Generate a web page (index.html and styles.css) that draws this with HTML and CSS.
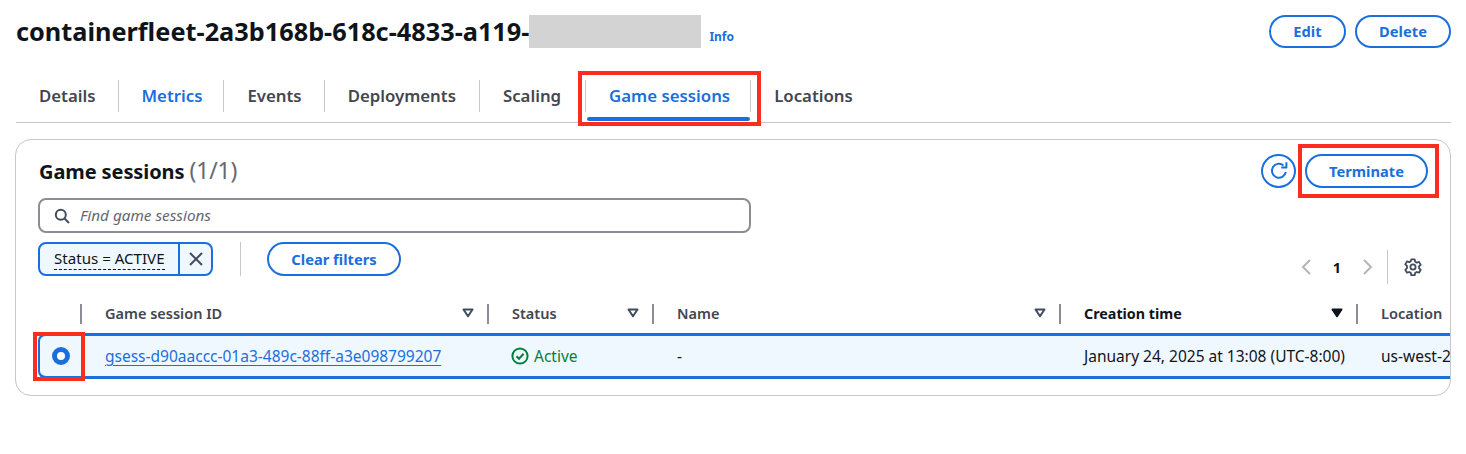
FILE: index.html
```html
<!DOCTYPE html>
<html lang="en">
<head>
<meta charset="utf-8">
<title>Game sessions</title>
<link rel="stylesheet" href="styles.css">
</head>
<body>
<header class="page-head">
  <div class="title-wrap">
    <h1 class="title">containerfleet-2a3b168b-618c-4833-a119-</h1>
    <span class="mask"></span>
    <a class="info">Info</a>
  </div>
  <div class="head-actions">
    <button class="btn btn-edit">Edit</button>
    <button class="btn btn-delete">Delete</button>
  </div>
</header>

<nav class="tabs">
  <a class="tab tab-first">Details</a>
  <a class="tab tab-link">Metrics</a>
  <a class="tab">Events</a>
  <a class="tab tab-deploy">Deployments</a>
  <a class="tab tab-scaling">Scaling</a>
  <a class="tab tab-active">Game sessions</a>
  <a class="tab">Locations</a>
  <span class="mark mark-tab"></span>
</nav>

<section class="card">
  <div class="card-head">
    <h2 class="card-title">Game sessions <span class="count">(1/1)</span></h2>
    <div class="card-actions">
      <button class="icon-btn" aria-label="Refresh">
        <svg width="20" height="20" viewBox="0 0 20 20" fill="none" stroke="#1a6fdc" stroke-width="2"><path d="M16.8 11A7 7 0 1 1 14.4 4.4"/><path d="M17.4 1.2v5.2h-5.2" stroke-linejoin="round"/></svg>
      </button>
      <button class="btn btn-terminate">Terminate</button>
      <span class="mark mark-terminate"></span>
    </div>
  </div>

  <div class="search">
    <svg width="16" height="16" viewBox="0 0 16 16" fill="none" stroke="#414d5c" stroke-width="2"><circle cx="6.8" cy="6.8" r="5"/><path d="M10.5 10.5l4.5 4.5"/></svg>
    <span class="placeholder">Find game sessions</span>
  </div>

  <div class="filter-row">
    <div class="chip">
      <span class="chip-label"><span class="chip-text">Status = ACTIVE</span></span>
      <span class="chip-x">
        <svg width="14" height="14" viewBox="0 0 14 14" fill="none" stroke="#414d5c" stroke-width="2"><path d="M1 1l12 12M13 1L1 13"/></svg>
      </span>
    </div>
    <span class="filter-div"></span>
    <button class="btn btn-clear">Clear filters</button>
    <div class="pager">
      <svg width="10" height="16" viewBox="0 0 10 16" fill="none" stroke="#b4b4bb" stroke-width="2"><path d="M9 1L2 8l7 7"/></svg>
      <span class="page-num">1</span>
      <svg width="10" height="16" viewBox="0 0 10 16" fill="none" stroke="#b4b4bb" stroke-width="2"><path d="M1 1l7 7-7 7"/></svg>
      <span class="pager-div"></span>
      <svg class="gear" width="18" height="18" viewBox="0 0 18 18" fill="none" stroke="#414d5c" stroke-width="1.8" stroke-linejoin="round"><path d="M7.3 1.4h3.4l.5 2.3 1.6.9 2.2-.7 1.7 3-1.7 1.5v1.8l1.7 1.6-1.7 2.9-2.2-.7-1.6.9-.5 2.3H7.3l-.5-2.3-1.6-.9-2.2.7-1.7-2.9 1.7-1.6V7.9L1.3 6.4l1.7-3 2.2.7 1.6-.9z"/><circle cx="9" cy="9" r="2.6"/></svg>
    </div>
  </div>

  <div class="table">
    <div class="th th-select"></div>
    <div class="th">Game session ID<svg class="caret" width="12" height="10" viewBox="0 0 12 10" fill="none" stroke="#414d5c" stroke-width="2" stroke-linejoin="round"><path d="M1.5 1.5h9L6 8.3z"/></svg></div>
    <div class="th">Status<svg class="caret" width="12" height="10" viewBox="0 0 12 10" fill="none" stroke="#414d5c" stroke-width="2" stroke-linejoin="round"><path d="M1.5 1.5h9L6 8.3z"/></svg></div>
    <div class="th">Name<svg class="caret" width="12" height="10" viewBox="0 0 12 10" fill="none" stroke="#414d5c" stroke-width="2" stroke-linejoin="round"><path d="M1.5 1.5h9L6 8.3z"/></svg></div>
    <div class="th th-sorted">Creation time<svg class="caret" width="12" height="10" viewBox="0 0 12 10" fill="#0f141a" stroke="#0f141a" stroke-width="2" stroke-linejoin="round"><path d="M1.5 1.5h9L6 8.3z"/></svg></div>
    <div class="th th-last">Location</div>

    <div class="td td-select"><span class="radio"></span><span class="mark mark-radio"></span></div>
    <div class="td"><a class="session-link">gsess-d90aaccc-01a3-489c-88ff-a3e098799207</a></div>
    <div class="td td-status">
      <svg width="18" height="18" viewBox="0 0 18 18" fill="none" stroke="#037f3c" stroke-width="2"><circle cx="9" cy="9" r="7.6"/><path d="M5.5 9.2l2.5 2.5 4.6-5"/></svg>
      <span>Active</span>
    </div>
    <div class="td">-</div>
    <div class="td">January 24, 2025 at 13:08 (UTC-8:00)</div>
    <div class="td td-last">us-west-2</div>
  </div>
</section>
</body>
</html>
```
FILE: styles.css
```css
* { box-sizing: border-box; }

html, body { margin: 0; padding: 0; background: #fff; }

body {
  width: 1466px;
  height: 454px;
  overflow: hidden;
  font-family: "Noto Sans", "Open Sans", sans-serif;
  font-size: 15.5px;
  color: #0f141a;
}

/* Page header */
.page-head {
  display: flex;
  justify-content: space-between;
  height: 80px;
  padding: 15px 15px 0 16px;
}

.title-wrap { display: flex; align-items: flex-start; }

.title {
  margin: 0;
  font-size: 25.3px;
  line-height: 33px;
  font-weight: 700;
}

.mask { width: 172px; height: 33px; background: #d3d3d3; }

.info {
  margin: 14px 0 0 8px;
  font-size: 12px;
  line-height: 16px;
  font-weight: 700;
  color: #1a6fdc;
}

.head-actions { display: flex; gap: 9px; }

.btn {
  height: 33px;
  border: 2px solid #1a6fdc;
  border-radius: 17px;
  background: #fff;
  padding: 0;
  font: 700 14.7px/18px "Noto Sans", sans-serif;
  color: #1a6fdc;
}

.btn-edit { width: 77px; padding-bottom: 1px; }
.btn-delete { width: 96px; padding-bottom: 1px; }
.btn-terminate { width: 123px; height: 34px; }
.btn-clear { width: 134px; height: 34px; margin-left: 26px; }

/* Tabs */
.tabs {
  position: relative;
  display: flex;
  height: 43px;
  margin: 0 15px 0 16px;
  border-bottom: 1px solid #c6c6cd;
}

.tab {
  position: relative;
  height: 32px;
  padding: 0 22px 0 23px;
  border-left: 1px solid #c6c6cd;
  font-size: 16.8px;
  line-height: 32px;
  font-weight: 600;
  color: #424650;
}

.tab-first { border-left: 0; }
.tab-link { color: #1a6fdc; padding-right: 21px; }
.tab-deploy { padding-right: 23px; }
.tab-scaling { padding-right: 24px; }
.tab-active { color: #1a6fdc; padding-right: 20px; }

.tab-active::after {
  content: "";
  position: absolute;
  left: 1px;
  right: 0;
  top: 37px;
  height: 4px;
  border-radius: 2px;
  background: #1a6fdc;
}

/* Red annotation boxes */
.mark { position: absolute; border: 4px solid #fa2d1f; pointer-events: none; }
.mark-tab { left: 562px; top: -9px; width: 183px; height: 55px; }
.mark-terminate { left: 37px; top: -10px; width: 141px; height: 54px; }
.mark-radio { left: -7px; top: -4px; width: 52px; height: 49px; }

/* Card */
.card {
  height: 257px;
  margin: 16px 15px 0;
  padding: 14px 0 0 22px;
  border: 1px solid #c6c6cd;
  border-radius: 16px;
  overflow: hidden;
}

.card-head {
  display: flex;
  justify-content: space-between;
  height: 44px;
}

.card-title {
  margin: 2px 0 0 1px;
  font-size: 20px;
  line-height: 32px;
  font-weight: 700;
  letter-spacing: -0.1px;
}

.count { font-weight: 400; font-size: 22.8px; line-height: 20px; color: #656871; }

.card-actions {
  position: relative;
  display: flex;
  gap: 9px;
  margin-right: 22px;
}

.icon-btn {
  display: flex;
  align-items: center;
  justify-content: center;
  width: 35px;
  height: 34px;
  padding: 0;
  border: 2px solid #1a6fdc;
  border-radius: 50%;
  background: #fff;
}

.search {
  display: flex;
  align-items: center;
  gap: 10px;
  width: 713px;
  height: 35px;
  padding-left: 14px;
  border: 2px solid #8c8c94;
  border-radius: 8px;
}

.placeholder { margin-top: -2px; font-style: italic; color: #656871; font-size: 15.3px; }

.filter-row {
  display: flex;
  align-items: flex-start;
  margin-top: 9px;
  margin-right: 22px;
}

.chip {
  display: flex;
  width: 175px;
  height: 34px;
  border: 2px solid #1a6fdc;
  border-radius: 8px;
  background: #f0f8ff;
  font-size: 15.1px;
}

.chip-label {
  flex: 1;
  padding: 0 0 0 14px;
  line-height: 28px;
  border-right: 2px solid #1a6fdc;
}

.chip-text { border-bottom: 1px dashed #0f141a; padding-bottom: 1px; }

.chip-x {
  display: flex;
  align-items: center;
  justify-content: center;
  width: 31px;
}

.filter-div { width: 1px; height: 34px; margin-left: 27px; background: #c6c6cd; }

.pager {
  display: flex;
  align-items: center;
  height: 34px;
  margin: 8px 0 0 auto;
}

.page-num { width: 52px; text-align: center; font-weight: 700; font-size: 14.5px; }

.pager-div { width: 1px; height: 34px; margin: 0 16px 0 14px; background: #c6c6cd; }

.gear { margin-right: 6px; }

/* Table */
.table {
  display: grid;
  grid-template-columns: 42px 407px 165px 407px 297px 96px;
  margin-top: 16px;
  width: 1414px;
}

.th {
  position: relative;
  display: flex;
  align-items: center;
  justify-content: space-between;
  height: 33px;
  padding: 0 13px 7px 25px;
  font-weight: 600;
  font-size: 14.5px;
  color: #424650;
  white-space: nowrap;
}

.th::before {
  content: "";
  position: absolute;
  left: 0;
  top: 4px;
  bottom: 9px;
  width: 2px;
  background: #8c8c94;
}

.th-select::before { display: none; }
.th-sorted { color: #0f141a; font-weight: 700; font-size: 14.3px; }
.th-last { padding-right: 0; font-size: 14.6px; }

.td {
  display: flex;
  align-items: center;
  height: 46px;
  padding-left: 25px;
  background: #f0f8ff;
  border-top: 3px solid #1a6fdc;
  border-bottom: 3px solid #1a6fdc;
  white-space: nowrap;
  overflow: hidden;
}

.td-select {
  position: relative;
  overflow: visible;
  padding-left: 12px;
  border-left: 2px solid #1a6fdc;
  border-radius: 8px 0 0 8px;
}

.radio {
  width: 18px;
  height: 18px;
  border: 5px solid #1a6fdc;
  border-radius: 50%;
  background: #fff;
}

.session-link {
  color: #1a6fdc;
  text-decoration: underline;
  text-underline-offset: 3px;
}

.td-status { padding-left: 24px; gap: 5px; color: #037f3c; }
```
